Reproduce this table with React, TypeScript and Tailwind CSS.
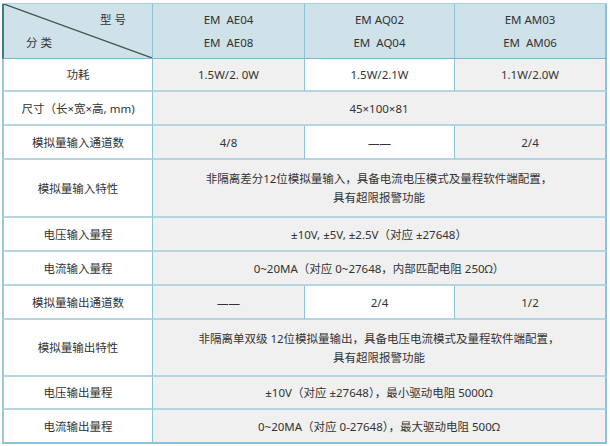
import React from "react";

const font = { fontFamily: '"Noto Sans", "Noto Sans CJK SC", sans-serif' };

type CellProps = {
  children?: React.ReactNode;
  span?: string;
  bg?: string;
  last?: boolean;
  first?: boolean;
  bottom?: boolean;
};

function Cell({ children, span = "", bg = "bg-[#f0f0f0]", last, first, bottom }: CellProps) {
  return (
    <div
      className={[
        "flex flex-col items-center justify-center text-center leading-[19px]",
        span,
        bg,
        first ? "border-l-2 border-l-[#9cc7d8]" : "",
        last ? "border-r-2 border-r-[#8cc2d8]" : "border-r border-r-[#8fc2d5]",
        bottom ? "border-b-2 border-b-[#8cc2d8]" : "border-b-2 border-b-[#b5d5e1]",
      ].join(" ")}
    >
      {children}
    </div>
  );
}

export default function App() {
  const rows: { label: string; h: string; cells: { text: React.ReactNode; span?: string; bg?: string }[] }[] = [
    {
      label: "功耗",
      h: "h-[33px]",
      cells: [
        { text: "1.5W/2. 0W" },
        { text: "1.5W/2.1W", bg: "bg-white" },
        { text: "1.1W/2.0W" },
      ],
    },
    {
      label: "尺寸（长×宽×高, mm)",
      h: "h-[34px]",
      cells: [{ text: "45×100×81", span: "col-span-3" }],
    },
    {
      label: "模拟量输入通道数",
      h: "h-[34px]",
      cells: [
        { text: "4/8" },
        { text: "——", bg: "bg-white" },
        { text: "2/4" },
      ],
    },
    {
      label: "模拟量输入特性",
      h: "h-[58px]",
      cells: [
        {
          text: (
            <>
              <span>非隔离差分12位模拟量输入，具备电流电压模式及量程软件端配置，</span>
              <span>具有超限报警功能</span>
            </>
          ),
          span: "col-span-3",
        },
      ],
    },
    {
      label: "电压输入量程",
      h: "h-[34px]",
      cells: [{ text: "±10V, ±5V, ±2.5V（对应 ±27648）", span: "col-span-3" }],
    },
    {
      label: "电流输入量程",
      h: "h-[34px]",
      cells: [{ text: "0~20MA（对应 0~27648，内部匹配电阻 250Ω）", span: "col-span-3" }],
    },
    {
      label: "模拟量输出通道数",
      h: "h-[34px]",
      cells: [
        { text: "——" },
        { text: "2/4", bg: "bg-white" },
        { text: "1/2" },
      ],
    },
    {
      label: "模拟量输出特性",
      h: "h-[57px]",
      cells: [
        {
          text: (
            <>
              <span>非隔离单双级 12位模拟量输出，具备电压电流模式及量程软件端配置，</span>
              <span>具有超限报警功能</span>
            </>
          ),
          span: "col-span-3",
        },
      ],
    },
    {
      label: "电压输出量程",
      h: "h-[33px]",
      cells: [{ text: "±10V（对应 ±27648），最小驱动电阻 5000Ω", span: "col-span-3" }],
    },
    {
      label: "电流输出量程",
      h: "h-[34px]",
      cells: [{ text: "0~20MA（对应 0-27648），最大驱动电阻 500Ω", span: "col-span-3" }],
    },
  ];

  return (
    <div className="w-[610px] h-[446px] bg-white pt-[3px] pl-[2px]" style={font}>
      <div className="w-[605px] border-t border-t-[#a8cfdd] text-[11.5px] text-[#333]">
        {/* header */}
        <div className="grid grid-cols-[151px_152px_150px_152px] h-[55px] bg-[#cfe1e9]">
          <div className="relative border-l-2 border-l-[#3d7a84] border-r border-r-[#8fc2d5] border-b border-b-[#7fb6cb] flex flex-col justify-center leading-[23px]">
            <svg className="absolute inset-0 w-full h-full" viewBox="0 0 100 100" preserveAspectRatio="none">
              <line x1="0" y1="0" x2="100" y2="100" stroke="#3e5558" strokeWidth="1.2" vectorEffect="non-scaling-stroke" />
            </svg>
            <div className="text-right pr-[26px] whitespace-pre">型 号</div>
            <div className="text-left pl-[22px] whitespace-pre">分 类</div>
          </div>
          {[
            ["EM  AE04", "EM  AE08"],
            ["EM AQ02", "EM  AQ04"],
            ["EM AM03", "EM  AM06"],
          ].map((pair, i) => (
            <div
              key={i}
              className={[
                "flex flex-col items-center justify-center leading-[23px] whitespace-pre border-b border-b-[#7fb6cb]",
                i === 2 ? "border-r-2 border-r-[#8cc2d8]" : "border-r border-r-[#8fc2d5]",
              ].join(" ")}
            >
              <span>{pair[0]}</span>
              <span>{pair[1]}</span>
            </div>
          ))}
        </div>
        {rows.map((r, ri) => {
          const bottom = ri === rows.length - 1;
          return (
            <div key={ri} className={`grid grid-cols-[151px_152px_150px_152px] ${r.h}`}>
              <Cell first bg="bg-white" bottom={bottom}>
                {r.label}
              </Cell>
              {r.cells.map((c, ci) => (
                <Cell key={ci} span={c.span} bg={c.bg} last={ci === r.cells.length - 1} bottom={bottom}>
                  {c.text}
                </Cell>
              ))}
            </div>
          );
        })}
      </div>
    </div>
  );
}
